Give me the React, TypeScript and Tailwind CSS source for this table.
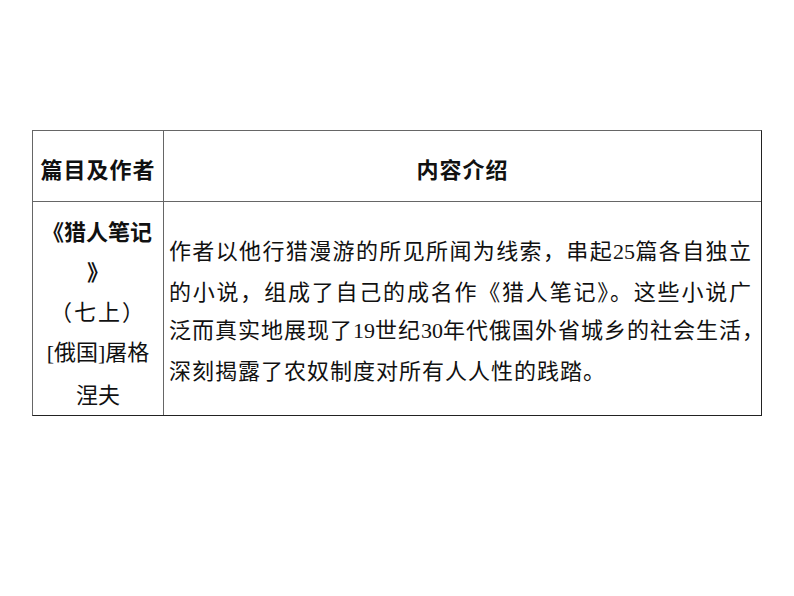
const cjk = { fontFamily: '"Noto Sans CJK SC", "Noto Sans", sans-serif' };
const serif = { fontFamily: '"Liberation Serif", "Noto Sans CJK SC", serif' };

function Num({ children }: { children: string }) {
  return (
    <span style={serif} className="tracking-normal">
      {children}
    </span>
  );
}

const intro = [
  <>作者以他行猎漫游的所见所闻为线索，串起<Num>25</Num>篇各自独立</>,
  <>的小说，组成了自己的成名作《猎人笔记》。这些小说广</>,
  <>泛而真实地展现了<Num>19</Num>世纪<Num>30</Num>年代俄国外省城乡的社会生活，</>,
];

export default function App() {
  return (
    <div className="w-[794px] h-[596px] bg-white text-[#111]" style={cjk}>
      <div className="pt-[130px] pl-[32px]">
        <div className="w-[730px] grid grid-cols-[131px_minmax(0,1fr)] border border-[#666] border-r-[#222] border-b-[#222]">
          <div className="h-[71px] pt-[4px] flex items-center justify-center border-r border-b border-[#666] font-bold text-[22px] tracking-[1px]">
            篇目及作者
          </div>
          <div className="h-[71px] pt-[4px] flex items-center justify-center border-b border-[#666] font-bold text-[22px] tracking-[1px]">
            内容介绍
          </div>
          <div className="h-[213px] flex flex-col items-center justify-center border-r border-[#666] text-[22px] leading-[40px] pt-[6px]">
            <div className="font-bold whitespace-nowrap pr-[2px]">《猎人笔记</div>
            <div className="font-bold">》</div>
            <div className="tracking-[2px]">（七上）</div>
            <div className="whitespace-nowrap">
              <span style={serif}>[</span>俄国<span style={serif}>]</span>屠格
            </div>
            <div>涅夫</div>
          </div>
          <div className="h-[213px] flex flex-col justify-center pl-[5px] pr-[9px] text-[22px] leading-[38px] tracking-[1px]">
            {intro.map((line, i) => (
              <div key={i} className="whitespace-nowrap text-justify [text-align-last:justify]">
                {line}
              </div>
            ))}
            <div className="whitespace-nowrap">深刻揭露了农奴制度对所有人人性的践踏。</div>
          </div>
        </div>
      </div>
    </div>
  );
}
